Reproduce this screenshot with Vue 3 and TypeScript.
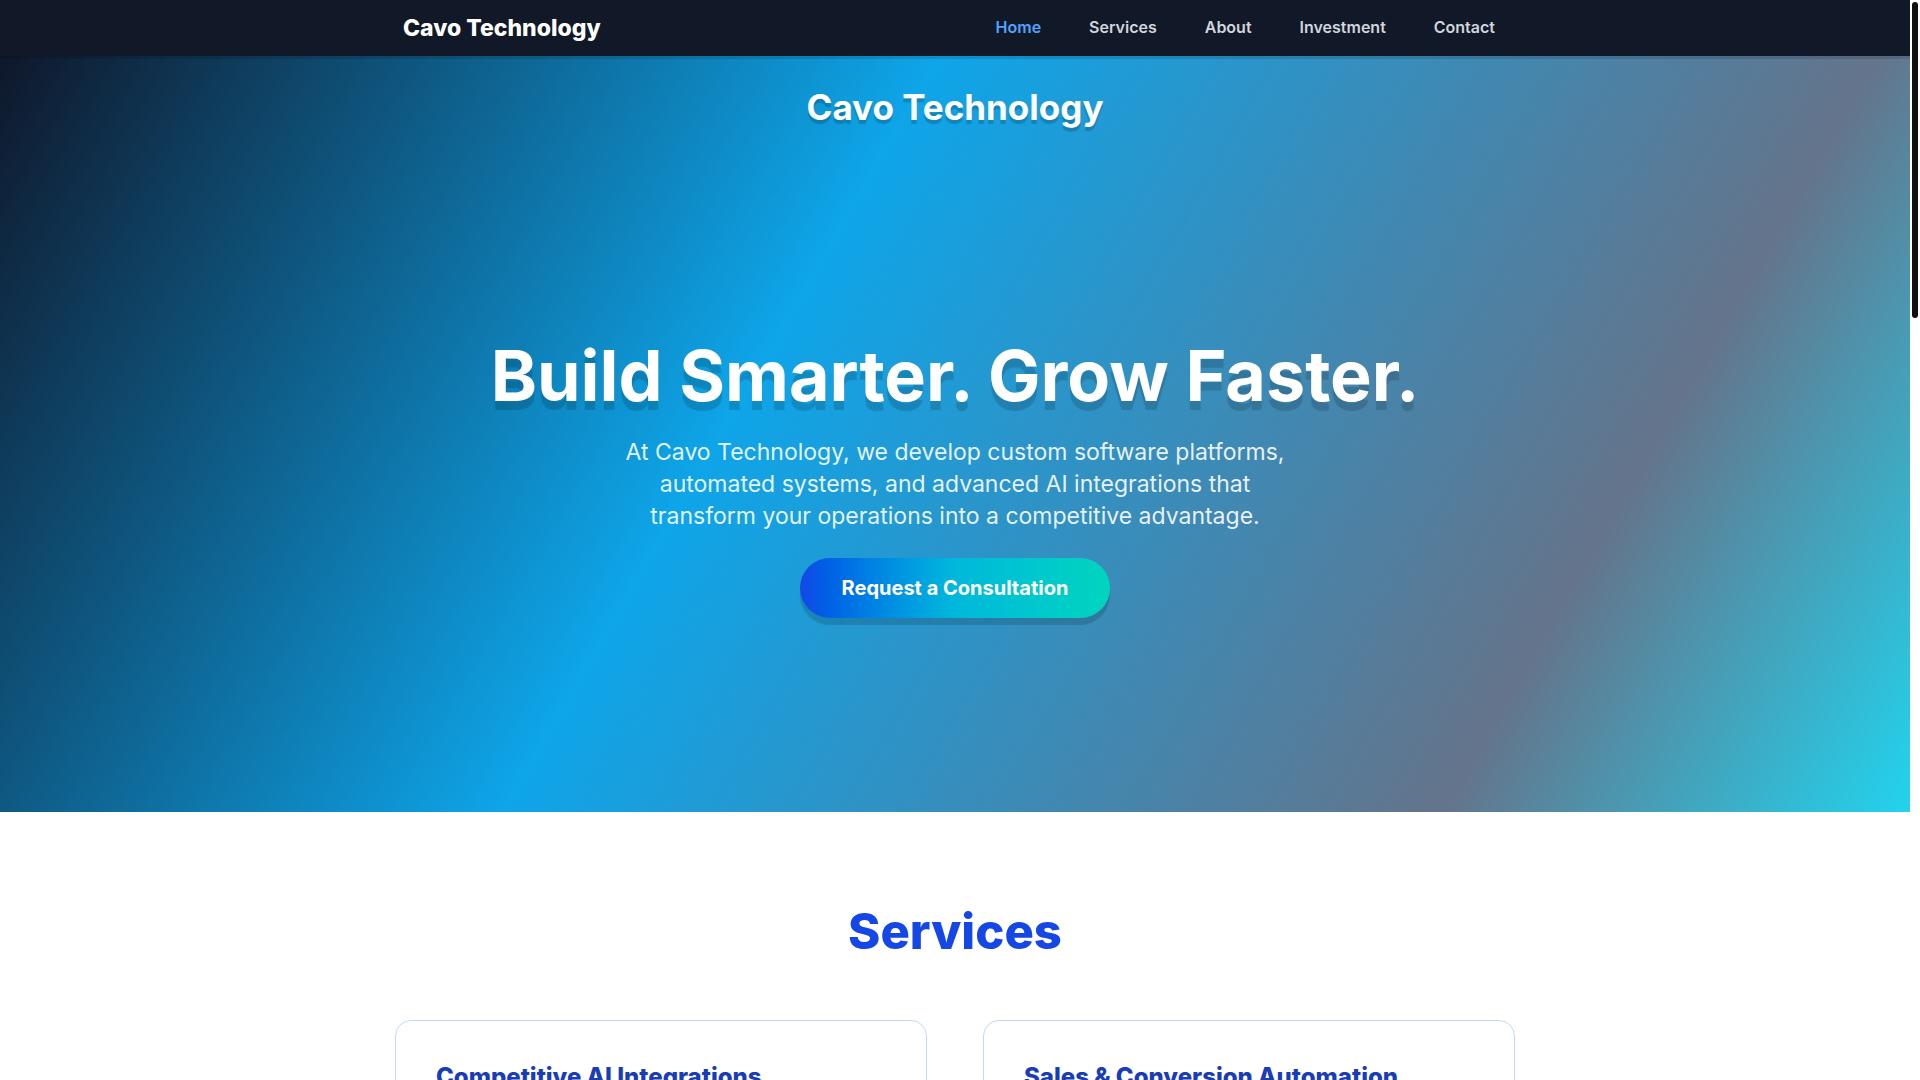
<script setup lang="ts">
interface NavLink {
  label: string
  href: string
}

interface Service {
  title: string
}

const links: NavLink[] = [
  { label: 'Home', href: '#home' },
  { label: 'Services', href: '#services' },
  { label: 'About', href: '#about' },
  { label: 'Investment', href: '#investment' },
  { label: 'Contact', href: '#contact' },
]

const services: Service[] = [
  { title: 'Competitive AI Integrations' },
  { title: 'Sales & Conversion Automation' },
]
</script>

<template>
  <div class="page">
    <header class="topbar">
      <div class="topbar-inner">
        <a class="logo" href="#home">Cavo Technology</a>
        <nav class="nav" aria-label="Main">
          <a
            v-for="(link, i) in links"
            :key="link.href"
            :href="link.href"
            class="nav-link"
            :class="{ active: i === 0 }"
          >{{ link.label }}</a>
        </nav>
      </div>
    </header>

    <main>
      <section id="home" class="hero">
        <p class="hero-brand">Cavo Technology</p>
        <div class="hero-body">
          <h1>Build Smarter. Grow Faster.</h1>
          <p class="lead">
            At Cavo Technology, we develop custom software platforms, automated systems,
            and advanced AI integrations that transform your operations into a competitive
            advantage.
          </p>
          <button type="button" class="cta">Request a Consultation</button>
        </div>
      </section>

      <section id="services" class="services">
        <h2>Services</h2>
        <div class="cards">
          <article v-for="service in services" :key="service.title" class="card">
            <h3>{{ service.title }}</h3>
          </article>
        </div>
      </section>
    </main>

    <div class="scroll-thumb" aria-hidden="true"></div>
  </div>
</template>

<style>
body {
  background: #ffffff;
}
</style>

<style scoped>
.page {
  box-sizing: border-box;
  height: 100vh;
  overflow: hidden;
  padding-right: 10px;
  font-family: Inter, "Liberation Sans", sans-serif;
  background: #ffffff;
}

.page *,
.page *::before {
  box-sizing: border-box;
}

h1,
h2,
h3,
p {
  margin: 0;
}

a {
  text-decoration: none;
}

.topbar {
  position: relative;
  z-index: 1;
  background: #111827;
  box-shadow: 0 3px 0 rgba(0, 0, 0, 0.12);
}

.topbar-inner {
  display: flex;
  align-items: center;
  justify-content: space-between;
  max-width: 1120px;
  height: 56px;
  margin: 0 auto;
  padding: 0 8px;
}

.logo {
  color: #ffffff;
  font-size: 23px;
  font-weight: 800;
  line-height: 32px;
}

.nav {
  display: flex;
  gap: 24px;
}

.nav-link {
  padding: 2px 12px 4px;
  color: #d1d5dc;
  font-size: 16px;
  font-weight: 600;
  line-height: 24px;
}

.nav-link.active {
  color: #51a2ff;
}

.hero {
  display: flex;
  flex-direction: column;
  height: 70vh;
  padding: 32px 24px 0;
  color: #ffffff;
  text-align: center;
  background: linear-gradient(120deg, #0f172a 0%, #0ea5e9 40%, #64748b 80%, #22d3ee 100%);
}

.hero-brand {
  margin-bottom: 20px;
  font-size: 35px;
  font-weight: 700;
  line-height: 38px;
  text-shadow: 0 4px 1px rgba(0, 0, 0, 0.18);
}

.hero-body {
  display: flex;
  flex: 1;
  flex-direction: column;
  align-items: center;
  justify-content: center;
}

h1 {
  font-size: 70px;
  font-weight: 700;
  line-height: 72px;
  text-shadow: 0 9px 1px rgba(0, 0, 0, 0.15);
}

.lead {
  max-width: 672px;
  margin-top: 24px;
  color: rgba(255, 255, 255, 0.9);
  font-size: 23px;
  line-height: 32px;
}

.cta {
  height: 60px;
  margin-top: 26px;
  padding: 0 42px;
  border: 0;
  border-radius: 30px;
  color: #ffffff;
  font-family: inherit;
  font-size: 20px;
  font-weight: 700;
  line-height: 28px;
  background: linear-gradient(to right in oklab, #1447e6, #00b8db 50%, #00d5be);
  box-shadow: 0 7px 1px rgba(0, 0, 0, 0.15);
  cursor: pointer;
}

.services {
  padding: 96px 24px;
}

h2 {
  color: #1447e6;
  font-size: 49px;
  font-weight: 800;
  line-height: 48px;
  text-align: center;
}

.cards {
  display: grid;
  grid-template-columns: 1fr 1fr;
  gap: 56px;
  max-width: 1120px;
  margin: 64px auto 0;
}

.card {
  padding: 40px;
  border: 1px solid #bedbff;
  border-radius: 16px;
  background: #ffffff;
}

h3 {
  color: #193cb8;
  font-size: 24px;
  font-weight: 800;
  line-height: 32px;
}

.scroll-thumb {
  position: fixed;
  top: 2px;
  right: 2px;
  width: 6px;
  height: 316px;
  border-radius: 3px;
  background: #111111;
}
</style>
